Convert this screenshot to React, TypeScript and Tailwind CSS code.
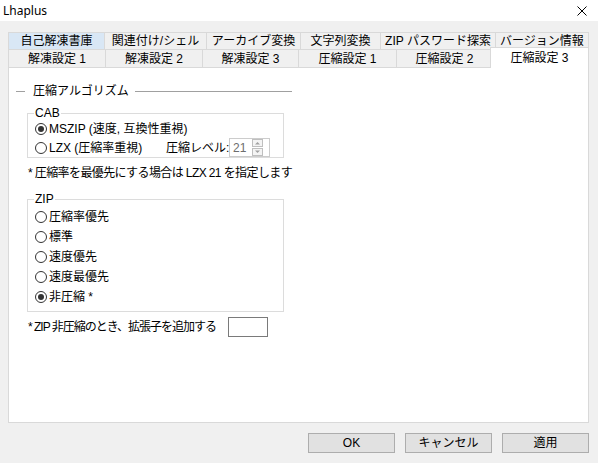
import React from "react";

const FONT = { fontFamily: '"Liberation Sans", "Noto Sans CJK JP", sans-serif' };

const ROW1 = [
  { label: "自己解凍書庫", w: "w-[96px]", hover: true },
  { label: "関連付け/シェル", w: "w-[102px]" },
  { label: "アーカイブ変換", w: "w-[94px]" },
  { label: "文字列変換", w: "w-[80px]" },
  { label: "ZIP パスワード探索", w: "w-[115px]" },
  { label: "バージョン情報", w: "w-[94px]" },
];

const ROW2 = [
  { label: "解凍設定 1", w: "w-[97px]" },
  { label: "解凍設定 2", w: "w-[97px]" },
  { label: "解凍設定 3", w: "w-[96px]" },
  { label: "圧縮設定 1", w: "w-[98px]" },
  { label: "圧縮設定 2", w: "w-[96px]" },
];

function Radio({ checked }: { checked?: boolean }) {
  return (
    <span className="w-[12px] h-[12px] rounded-full border border-[#333] bg-white flex items-center justify-center shrink-0">
      {checked && <span className="w-[6px] h-[6px] rounded-full bg-[#333]" />}
    </span>
  );
}

function RadioRow({ label, checked }: { label: string; checked?: boolean }) {
  return (
    <div className="h-[20px] flex items-center gap-[2px]">
      <Radio checked={checked} />
      <span>{label}</span>
    </div>
  );
}

function Spin() {
  return (
    <div className="w-[41px] h-[19px] border border-[#cccccc] bg-white flex items-center shrink-0">
      <span className="pl-[3px] w-[22px] text-[#6d6d6d]">21</span>
      <svg width="11" height="17" viewBox="0 0 11 17">
        <rect x="0.5" y="0.5" width="10" height="7" fill="#f4f4f4" stroke="#bfbfbf" />
        <rect x="0.5" y="9.5" width="10" height="7" fill="#f4f4f4" stroke="#bfbfbf" />
        <path d="M3 5.5 L5.5 3 L8 5.5 Z" fill="#a0a0a0" />
        <path d="M3 11.5 L5.5 14 L8 11.5 Z" fill="#a0a0a0" />
      </svg>
    </div>
  );
}

export default function App() {
  return (
    <div
      className="w-[598px] h-[463px] bg-[#f0f0f0] text-[12px] text-black overflow-hidden whitespace-nowrap"
      style={FONT}
    >
      {/* Title bar */}
      <div className="h-[21px] bg-white flex items-center justify-between pl-[3px] pr-[11px]">
        <span className="text-[12px]" style={{ fontFamily: '"Noto Sans", sans-serif' }}>
          Lhaplus
        </span>
        <svg width="10" height="10" viewBox="0 0 10 10">
          <path d="M0.5 0.5 L9.5 9.5 M9.5 0.5 L0.5 9.5" stroke="#000" strokeWidth="1" />
        </svg>
      </div>

      <div className="pl-[8px] pt-[11px]">
        {/* Tabs */}
        <div className="w-[581px]">
          <div className="flex h-[17px]">
            {ROW1.map((t, i) => (
              <div
                key={t.label}
                className={`${t.w} h-[17px] flex items-center justify-center border-t border-l border-[#d9d9d9] ${
                  i === ROW1.length - 1 ? "border-r" : ""
                } ${t.hover ? "bg-[#d9e7f5]" : "bg-[#f0f0f0]"}`}
              >
                {t.label}
              </div>
            ))}
          </div>
          <div className="flex h-[18px]">
            {ROW2.map((t) => (
              <div
                key={t.label}
                className={`${t.w} h-[18px] flex items-center justify-center border-t border-l border-[#d9d9d9] bg-[#f0f0f0]`}
              >
                {t.label}
              </div>
            ))}
            <div className="relative z-10 w-[99px] h-[21px] -mt-[2px] -ml-[2px] flex items-start justify-center pt-[1px] bg-white border-t border-l border-r border-[#d9d9d9]">
              圧縮設定 3
            </div>
          </div>
        </div>

        {/* Panel */}
        <div className="w-[581px] h-[356px] bg-white border border-[#d9d9d9] pl-[7px]">
          <div className="mt-[16px] h-[14px] w-[276px] flex items-center">
            <span className="w-[9px] h-px bg-[#a0a0a0]" />
            <span className="ml-[8px] mr-[6px]">圧縮アルゴリズム</span>
            <span className="flex-1 h-px bg-[#a0a0a0]" />
          </div>

          {/* CAB */}
          <div className="relative mt-[15px] ml-[11px] w-[257px] border border-[#dcdcdc] pl-[7px] pt-[5px]">
            <span className="absolute -top-[9px] left-[6px] bg-white px-[1px] leading-[16px]">CAB</span>
            <div className="h-[19px] flex items-center gap-[2px]">
              <Radio checked />
              <span>MSZIP (速度, 互換性重視)</span>
            </div>
            <div className="h-[19px] flex items-center">
              <div className="w-[131px] flex items-center gap-[2px] shrink-0">
                <Radio />
                <span>LZX (圧縮率重視)</span>
              </div>
              <span className="w-[63px] shrink-0">圧縮レベル:</span>
              <Spin />
            </div>
          </div>

          <div className="mt-[8px] ml-[12px] h-[14px] flex items-center tracking-[-0.6px]">
            * 圧縮率を最優先にする場合は LZX 21 を指定します
          </div>

          {/* ZIP */}
          <div className="relative mt-[19px] ml-[11px] w-[257px] border border-[#dcdcdc] pl-[7px] pt-[7px] pb-[4px]">
            <span className="absolute -top-[9px] left-[6px] bg-white px-[1px] leading-[16px]">ZIP</span>
            <RadioRow label="圧縮率優先" />
            <RadioRow label="標準" />
            <RadioRow label="速度優先" />
            <RadioRow label="速度最優先" />
            <RadioRow label="非圧縮 *" checked />
          </div>

          <div className="mt-[5px] ml-[12px] h-[20px] flex items-center">
            <span className="w-[200px] shrink-0 tracking-[-1px]">* ZIP 非圧縮のとき、拡張子を追加する</span>
            <span className="w-[40px] h-[20px] border border-[#7a7a7a] bg-white shrink-0" />
          </div>
        </div>

        {/* Buttons */}
        <div className="w-[581px] mt-[10px] flex justify-end gap-[10px]">
          {["OK", "キャンセル", "適用"].map((b) => (
            <button
              key={b}
              className="w-[87px] h-[20px] bg-[#e1e1e1] border border-[#adadad] flex items-center justify-center text-[12px]"
            >
              {b}
            </button>
          ))}
        </div>
      </div>
    </div>
  );
}
